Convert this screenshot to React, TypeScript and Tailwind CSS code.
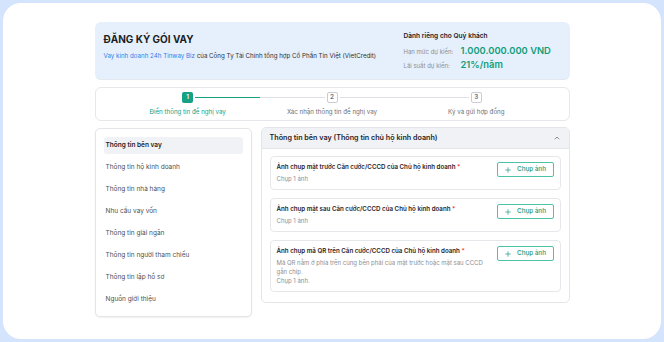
import { ChevronUp, Plus } from 'lucide-react';

const sideItems = [
  'Thông tin bên vay',
  'Thông tin hộ kinh doanh',
  'Thông tin nhà hàng',
  'Nhu cầu vay vốn',
  'Thông tin giải ngân',
  'Thông tin người tham chiếu',
  'Thông tin lập hồ sơ',
  'Nguồn giới thiệu',
];

const steps = ['Điền thông tin đề nghị vay', 'Xác nhận thông tin đề nghị vay', 'Ký và gửi hợp đồng'];

function CaptureButton() {
  return (
    <button className="flex h-[15px] w-[57px] shrink-0 items-center justify-center gap-[5px] rounded-[2px] border border-[#4cc3a6] bg-white text-[6.3px] font-medium text-[#17997c]">
      <Plus size={8} strokeWidth={2} />
      <span>Chụp ảnh</span>
    </button>
  );
}

function UploadCard({ title, children }: { title: string; children: React.ReactNode }) {
  return (
    <div className="flex items-start gap-[7px] rounded-[4px] border border-[#e6e7ea] bg-white pl-[6px] pr-[6px] pt-[5px] pb-[6px]">
      <div className="min-w-0 flex-1">
        <div className="text-[6.2px] font-semibold leading-[10px] text-[#1f2329]">
          {title} <span className="text-[#ef4444]">*</span>
        </div>
        <div className="mt-[2px] text-[6px] leading-[9px] text-[#8a8f98]">{children}</div>
      </div>
      <CaptureButton />
    </div>
  );
}

export default function App() {
  return (
    <div className="h-[342px] w-[664px] bg-[#d4e4fc] p-[3px] font-['Inter',sans-serif]">
      <div className="h-full w-full rounded-[18px] bg-white pt-[19px]">
        <div className="mx-auto w-[475px]">
          {/* header */}
          <div className="flex h-[58px] rounded-[6px] border-b border-[#e3e8ef] bg-[#e6f0fd] pl-[9px]">
            <div className="w-[300px] shrink-0 pt-[10px]">
              <div className="text-[10px] font-bold leading-[14px] text-[#1b1f24]">ĐĂNG KÝ GÓI VAY</div>
              <div className="mt-[5px] text-[6.2px] leading-[9px] text-[#2a2f36]">
                <span className="text-[#2f7fe8]">Vay kinh doanh 24h Tinway Biz</span> của Công Ty Tài Chính tổng hợp Cổ Phần Tín Việt (VietCredit)
              </div>
            </div>
            <div className="shrink-0 pt-[9px]">
              <div className="text-[6.6px] font-semibold leading-[10px] text-[#1f2329]">Dành riêng cho Quý khách</div>
              <div className="mt-[3px] flex h-[14px] items-center">
                <span className="w-[57px] shrink-0 text-[6px] text-[#8a8f98]">Hạn mức dự kiến:</span>
                <span className="text-[9.4px] font-semibold text-[#129d79]">1.000.000.000 VND</span>
              </div>
              <div className="flex h-[14px] items-center">
                <span className="w-[57px] shrink-0 text-[6px] text-[#8a8f98]">Lãi suất dự kiến:</span>
                <span className="text-[9.4px] font-semibold text-[#129d79]">21%/năm</span>
              </div>
            </div>
          </div>

          {/* stepper */}
          <div className="mt-[7px] grid h-[34px] grid-cols-3 rounded-[6px] border border-[#e6e7ea] bg-white px-[20px] pt-[4px]">
            {steps.map((label, i) => (
              <div key={label} className="flex flex-col items-center">
                <div className="flex w-full items-center gap-[2px]">
                  <div className={`h-px flex-1 ${i === 0 ? 'bg-transparent' : 'bg-[#dcdfe4]'}`} />
                  <div
                    className={`flex h-[11px] w-[11px] items-center justify-center rounded-[2px] text-[6.3px] font-semibold ${
                      i === 0 ? 'bg-[#16a085] text-white' : 'border border-[#c9cdd3] bg-white text-[#6b7079]'
                    }`}
                  >
                    {i + 1}
                  </div>
                  <div
                    className={`h-px flex-1 ${i === 0 ? 'bg-[#16a085]' : i === 2 ? 'bg-transparent' : 'bg-[#dcdfe4]'}`}
                  />
                </div>
                <div className={`mt-[4px] text-[6.2px] leading-[9px] ${i === 0 ? 'text-[#16a085]' : 'text-[#6b7079]'}`}>
                  {label}
                </div>
              </div>
            ))}
          </div>

          {/* body */}
          <div className="mt-[7px] flex items-start gap-[9px]">
            <div className="w-[157px] shrink-0 rounded-[5px] border border-[#e3e5e8] bg-white px-[8px] py-[8px] shadow-[0_1px_2px_rgba(0,0,0,0.06)]">
              <div className="flex flex-col gap-[5px]">
                {sideItems.map((item, i) => (
                  <div
                    key={item}
                    className={`flex h-[17px] items-center rounded-[3px] pl-[2px] text-[6.5px] ${
                      i === 0 ? 'bg-[#f1f2f5] font-semibold text-[#1f2329]' : 'text-[#4b5058]'
                    }`}
                  >
                    {item}
                  </div>
                ))}
              </div>
            </div>

            <div className="-mt-[1px] w-[309px] shrink-0 overflow-hidden rounded-[5px] border border-[#e3e5e8] bg-white">
              <div className="flex h-[21px] items-center justify-between border-b border-[#e3e5e8] bg-[#f1f2f6] px-[8px]">
                <span className="text-[7.2px] font-semibold text-[#1f2329]">Thông tin bên vay (Thông tin chủ hộ kinh doanh)</span>
                <ChevronUp size={8} className="text-[#555a63]" />
              </div>
              <div className="flex flex-col gap-[8px] px-[8px] pt-[7px] pb-[10px]">
                <UploadCard title="Ảnh chụp mặt trước Căn cước/CCCD của Chủ hộ kinh doanh">Chụp 1 ảnh</UploadCard>
                <UploadCard title="Ảnh chụp mặt sau Căn cước/CCCD của Chủ hộ kinh doanh">Chụp 1 ảnh</UploadCard>
                <UploadCard title="Ảnh chụp mã QR trên Căn cước/CCCD của Chủ hộ kinh doanh">
                  <div>Mã QR nằm ở phía trên cùng bên phải của mặt trước hoặc mặt sau CCCD gắn chip.</div>
                  <div>Chụp 1 ảnh.</div>
                </UploadCard>
              </div>
            </div>
          </div>
        </div>
      </div>
    </div>
  );
}
